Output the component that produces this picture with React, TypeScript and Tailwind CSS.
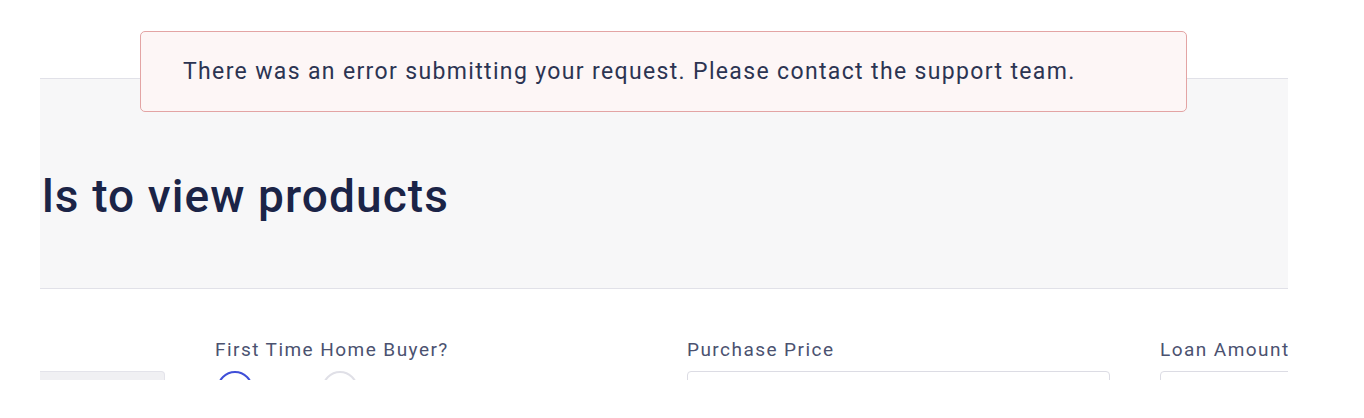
import React from "react"

const font = { fontFamily: "Roboto, 'Liberation Sans', sans-serif" }

function Field({ label, children, width }: { label?: string; children: React.ReactNode; width: string }) {
  return (
    <div className={`${width} shrink-0 flex flex-col`}>
      <div className="h-[20px] mb-[11px] text-[19px] leading-[20px] tracking-[1.45px] whitespace-nowrap text-[#4b5270]">
        {label ?? ""}
      </div>
      {children}
    </div>
  )
}

export default function App() {
  return (
    <div className="relative w-[1364px] h-[418px] bg-white overflow-hidden" style={font}>
      <div className="pt-[78px] pl-[40px]">
        <div className="w-[1248px] h-[302px] overflow-hidden">
          {/* page header panel */}
          <div className="h-[211px] bg-[#f7f7f8] border-y border-[#e1e1e8] flex items-center pl-[2px]">
            <h1 className="text-[46px] font-medium leading-none text-[#1b2447] tracking-[1.1px] mt-[24px]">
              ls to view products
            </h1>
          </div>

          {/* form row */}
          <div className="flex gap-[50px] pt-[51px]">
            <Field width="w-[125px]">
              <div className="h-[44px] bg-[#f0f0f3] border border-[#e3e3ea] rounded-r-[4px] border-l-0" />
            </Field>
            <Field width="w-[422px]" label="First Time Home Buyer?">
              <div className="flex gap-[69px] pl-[2px]">
                <span className="w-[36px] h-[36px] rounded-full border-2 border-[#3f4fd8] bg-white" />
                <span className="w-[36px] h-[36px] rounded-full border-2 border-[#e0e0e7] bg-white" />
              </div>
            </Field>
            <Field width="w-[423px]" label="Purchase Price">
              <div className="h-[44px] bg-white border border-[#dcdce4] rounded-[4px]" />
            </Field>
            <Field width="w-[423px]" label="Loan Amount">
              <div className="h-[44px] bg-white border border-[#dcdce4] rounded-[4px]" />
            </Field>
          </div>
        </div>
      </div>

      {/* error toast */}
      <div className="absolute left-[140px] top-[31px] w-[1047px] h-[81px] rounded-[5px] border border-[#e3a4a4] bg-[#fdf6f6] flex items-center pl-[42px]">
        <p className="text-[23px] tracking-[1.35px] text-[#2c3452] mt-[2px]">
          There was an error submitting your request. Please contact the support team.
        </p>
      </div>
    </div>
  )
}
